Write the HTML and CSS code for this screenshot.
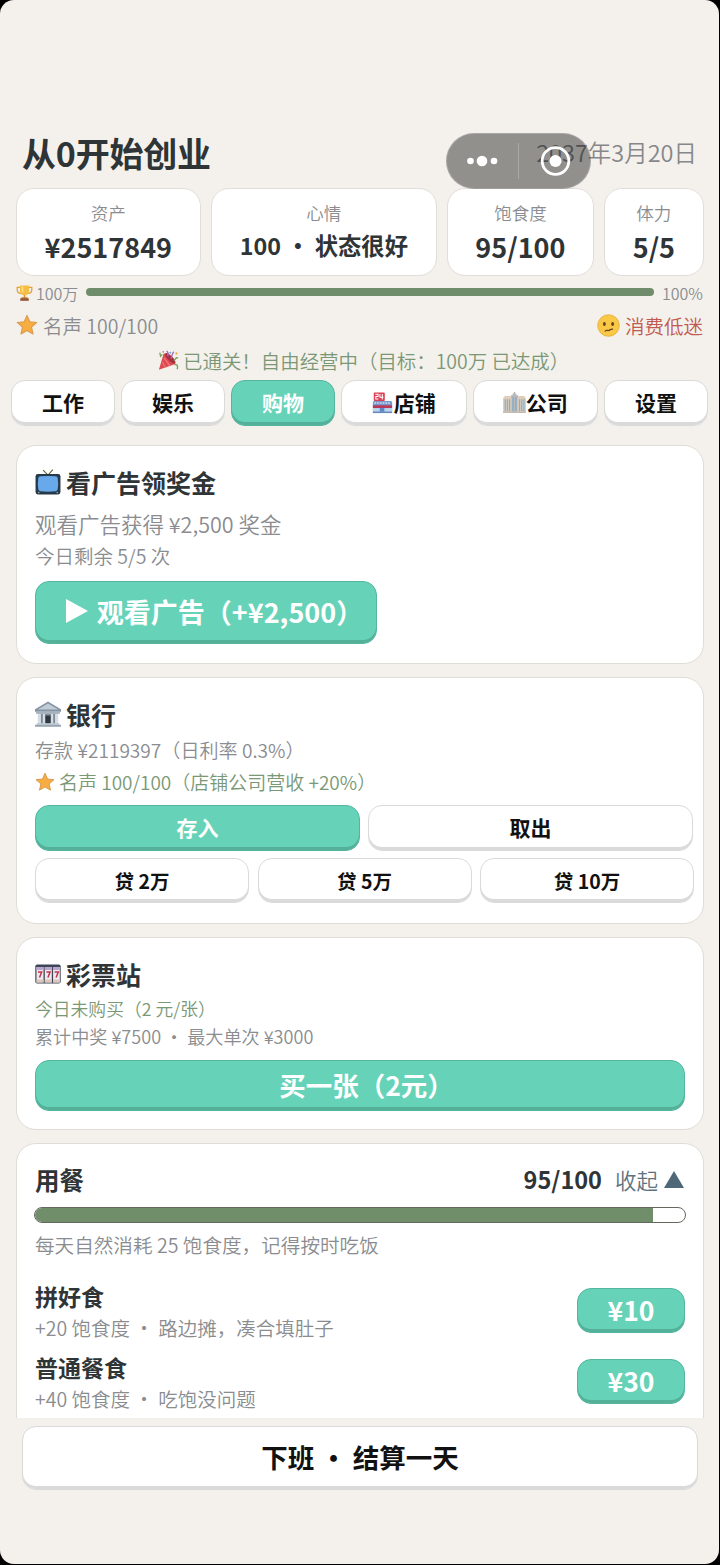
FILE: index.html
```html
<!DOCTYPE html>
<html lang="zh-CN">
<head>
<meta charset="utf-8">
<title>从0开始创业</title>
<link rel="stylesheet" href="styles.css">
</head>
<body>
<svg class="defs" width="0" height="0" aria-hidden="true">
  <symbol id="star" viewBox="0 0 24 24"><path d="M12 1.500l3 7 7.700.7-5.800 5.100 1.700 7.500L12 17.900l-6.600 3.900 1.700-7.500L1.300 9.200 9 8.500z" fill="#f8ad43" stroke="#d99a4c" stroke-width="1.200" stroke-linejoin="round"/></symbol>
  <symbol id="trophy" viewBox="0 0 24 24">
    <path d="M6 4H1.700v3.500c0 3 2 5 5.300 5M18 4h4.300v3.500c0 3-2 5-5.300 5" fill="none" stroke="#e0a23b" stroke-width="1.800"/>
    <path d="M5.500 1.500h13v7c0 4-2.500 7-6.500 7s-6.500-3-6.500-7z" fill="#f6bd45"/><path d="M7.500 2.500h3v10c-2-1-3-3-3-5z" fill="#fbd979"/>
    <path d="M11 15h2v4h-2z" fill="#d98d2f"/><path d="M8 18h8l1 2H7z" fill="#c7772d"/><path d="M6 19.500h12V23H6z" fill="#925332"/>
  </symbol>
  <symbol id="face" viewBox="0 0 24 24"><circle cx="12" cy="12" r="11.300" fill="#f9c846" stroke="#dda93b" stroke-width=".7"/><ellipse cx="7.700" cy="10.500" rx="1.500" ry="2.100" fill="#68431e"/><ellipse cx="16.300" cy="10.500" rx="1.500" ry="2.100" fill="#68431e"/><path d="M8.500 17.800c1.500-1.700 2.300-.2 3.700-.6 1.400-.4 1.800-1.600 4-1.400" fill="none" stroke="#68431e" stroke-width="1.300" stroke-linecap="round"/></symbol>
  <symbol id="party" viewBox="0 0 24 24">
    <path d="M1 22.500L6.500 4c5 0 12 6.500 13.500 12z" fill="#dc4b52"/><path d="M5 14l3.500 6M7 9l6.500 9" stroke="#f07478" stroke-width="1.500"/>
    <ellipse cx="14" cy="9.500" rx="2.800" ry="8" transform="rotate(-45 14 9.500)" fill="#a82f40"/>
    <path d="M15 10c1-4 1-6 3-8M11 7c1-2 1-4-1-6" fill="none" stroke="#9a69b6" stroke-width="1.500"/>
    <path d="M18 12c3-2 2-4 5-3M2 3l1 4 2-2M19 17c3-1 4 1 3 5" fill="none" stroke="#78a35d" stroke-width="1.600"/>
    <circle cx="21" cy="4" r="1.300" fill="#edae48"/><circle cx="6" cy="2" r="1" fill="#cc6b9e"/><circle cx="14" cy="3" r="1" fill="#6c9bd3"/>
  </symbol>
  <symbol id="tv" viewBox="0 0 24 24"><path d="M7.500 1L12 5.700 16.500.5" fill="none" stroke="#626b43" stroke-width="1.100"/><rect x=".5" y="4.700" width="23" height="18.800" rx="2.200" fill="#263a49"/><path d="M3 8.500Q3.200 7 5 6.800 12 6 19 6.800q1.800.2 2 1.700.7 5 0 10-.2 1.900-2 2.100-7 .9-14 0-1.800-.2-2-2.100-.7-5 0-10z" fill="#67a9eb"/><circle cx="3.500" cy="21.800" r=".7" fill="#a9b4bb"/><circle cx="20.500" cy="21.800" r=".7" fill="#a9b4bb"/></symbol>
  <symbol id="bank" viewBox="0 0 24 24"><path d="M0 7.500L12 .5l12 7V10H0z" fill="#8794a2"/><path d="M2.500 7.800L12 2.300l9.500 5.500z" fill="#bfcbd6"/><path d="M1 9.500h22v2.300H1z" fill="#a5b1bd"/><path d="M3 11.800h18V21H3z" fill="#7f8994"/><path d="M2.500 12h3v9h-3zm4.700 0h2v9h-2zm7.600 0h2v9h-2zm3.700 0h3v9h-3z" fill="#d5dee6"/><path d="M9.700 13.500h4.600V21H9.700z" fill="#2d3741"/><path d="M1.500 20.500h21v1.600h-21z" fill="#c0cad3"/><path d="M0 22h24v1.800H0z" fill="#98a5b1"/></symbol>
  <symbol id="slots" viewBox="0 0 26 20"><rect x=".3" y=".5" width="25.400" height="19" rx="2" fill="#3d4556"/><path d="M1.500 3h7v15.500h-7zm8.300 0h7v15.500h-7zm8.300 0h6.700v15.500h-6.700z" fill="#eee9ed"/><path d="M1.500 3h7v3h-7zm8.300 0h7v3h-7zm8.300 0h6.700v3h-6.700z" fill="#baa5ce"/><path d="M1.500 15.500h7v3h-7zm8.300 0h7v3h-7zm8.300 0h6.700v3h-6.700z" fill="#dbc6bb"/><path d="M3 8h3.700L4.500 13.500M11.400 8h3.700l-2.200 5.500M19.600 8h3.700l-2.200 5.500" fill="none" stroke="#bf354e" stroke-width="1.500"/></symbol>
  <symbol id="store" viewBox="0 0 22 24"><path d="M.5 11l1-1.300h19l1 1.300v11.500H.5z" fill="#7896c8"/><rect x="1.500" y=".5" width="12" height="9.200" rx="1" fill="#d94056"/><path d="M3.200 2.500h3v2.500H3.700v2.700h2.800M8.200 2.200v3.600H12M10.800 2.200v6" fill="none" stroke="#fff" stroke-width="1.100"/><path d="M.5 14.500h21v3H.5z" fill="#b8385c"/><path d="M2 12h18" stroke="#c8d9ee" stroke-width="1.500" stroke-dasharray="2 1"/><path d="M.5 17.500h21v4H.5z" fill="#b9d6ed"/><path d="M8 17.500h5v4H8z" fill="#5b86c8"/><path d="M.5 21.500h21V23H.5z" fill="#6886b7"/></symbol>
  <symbol id="office" viewBox="0 0 24 22"><path d="M8 3.500h2V1.500h1.200V0h1.600v1.500H14v2h2V22H8z" fill="#b8b9b8"/><path d="M0 6.500L2 4.300h5.500L9 6.500V22H0zm15 0l1.500-2.200H22l2 2.200V22h-9z" fill="#dfcdb8"/><path d="M2.300 7.500v13M4.600 7.500v13M6.900 7.500v13M17.300 7.500v13M19.600 7.500v13M21.900 7.500v13" stroke="#7eb2da" stroke-width="1.300"/><path d="M10.500 5v15M13.500 5v15" stroke="#85aecf" stroke-width="1.500"/><path d="M0 20.700h24V22H0z" fill="#c4bbb1"/></symbol>
</svg>

<main class="app">
  <header class="header">
    <h1 class="title">从0开始创业</h1>
    <span class="date">2037年3月20日</span>
    <div class="capsule">
      <svg width="145" height="56" viewBox="0 0 145 56" fill="#fff">
        <circle cx="24.500" cy="28" r="3.300"/><circle cx="36" cy="28" r="5.300"/><circle cx="48" cy="28" r="3.300"/>
        <path d="M72.500 10v36" stroke="#a9a9a5"/>
        <circle cx="109.500" cy="28" r="13.300" fill="none" stroke="#fff" stroke-width="2.800"/><circle cx="109.500" cy="28" r="6"/>
      </svg>
    </div>
  </header>

  <section class="stats">
    <div class="stat assets"><span class="stat-label">资产</span><b class="stat-value">¥2517849</b></div>
    <div class="stat mood"><span class="stat-label">心情</span><b class="stat-value small">100 ・ 状态很好</b></div>
    <div class="stat food"><span class="stat-label">饱食度</span><b class="stat-value">95/100</b></div>
    <div class="stat energy"><span class="stat-label">体力</span><b class="stat-value">5/5</b></div>
  </section>

  <div class="goal">
    <svg class="trophy"><use href="#trophy"/></svg><span class="goal-name">100万</span>
    <div class="goal-bar"></div><span>100%</span>
  </div>
  <div class="reputation">
    <span class="with-icon"><svg class="star"><use href="#star"/></svg>名声 100/100</span>
    <span class="with-icon market"><svg class="face"><use href="#face"/></svg>消费低迷</span>
  </div>
  <div class="cleared"><svg class="party"><use href="#party"/></svg>已通关！自由经营中（目标：100万 已达成）</div>

  <nav class="tabs">
    <button class="btn tab">工作</button>
    <button class="btn tab">娱乐</button>
    <button class="btn tab primary">购物</button>
    <button class="btn tab wide"><svg class="store"><use href="#store"/></svg>店铺</button>
    <button class="btn tab wide"><svg class="office"><use href="#office"/></svg>公司</button>
    <button class="btn tab">设置</button>
  </nav>

  <div class="content">
    <section class="card ad">
      <h2 class="card-title"><svg class="title-icon"><use href="#tv"/></svg>看广告领奖金</h2>
      <p class="ad-text">观看广告获得 ¥2,500 奖金</p>
      <p class="ad-left">今日剩余 5/5 次</p>
      <button class="btn primary watch"><svg class="play" viewBox="0 0 22 24"><path d="M0 0l22 12L0 24z" fill="#fff"/></svg><span class="tight-end">观看广告（+¥2,500）</span></button>
    </section>

    <section class="card bank">
      <h2 class="card-title"><svg class="title-icon"><use href="#bank"/></svg>银行</h2>
      <p class="deposit">存款 ¥2119397（日利率 0.3%）</p>
      <p class="bonus"><svg class="star-small"><use href="#star"/></svg>名声 100/100（店铺公司营收 +20%）</p>
      <div class="bank-actions"><button class="btn primary">存入</button><button class="btn">取出</button></div>
      <div class="loans"><button class="btn">贷 2万</button><button class="btn">贷 5万</button><button class="btn">贷 10万</button></div>
    </section>

    <section class="card lottery">
      <h2 class="card-title"><svg class="slots"><use href="#slots"/></svg>彩票站</h2>
      <p class="ticket green">今日未购买（2 元/张）</p>
      <p class="ticket">累计中奖 ¥7500 ・ 最大单次 ¥3000</p>
      <button class="btn primary buy"><span class="tight-end">买一张（2元）</span></button>
    </section>

    <section class="card meals">
      <div class="meal-head"><h2 class="meal-title">用餐</h2><b class="meal-count">95/100</b><span class="fold">收起</span><svg class="triangle" viewBox="0 0 20 17"><path d="M10 0l10 17H0z" fill="#4f6878"/></svg></div>
      <div class="meter"><div class="meter-fill" style="width:95%"></div></div>
      <p class="meal-note">每天自然消耗 25 饱食度，记得按时吃饭</p>
      <div class="meal">
        <div><h3 class="meal-name">拼好食</h3><p class="meal-desc">+20 饱食度 ・ 路边摊，凑合填肚子</p></div>
        <button class="btn primary price">¥10</button>
      </div>
      <div class="meal">
        <div><h3 class="meal-name">普通餐食</h3><p class="meal-desc">+40 饱食度 ・ 吃饱没问题</p></div>
        <button class="btn primary price">¥30</button>
      </div>
    </section>
  </div>

  <footer class="footer"><button class="btn finish">下班 ・ 结算一天</button></footer>
</main>
</body>
</html>
```
FILE: styles.css
```css
* { box-sizing: border-box; margin: 0; padding: 0; }
body { background: #000; font-family: "Noto Sans CJK SC", sans-serif; color: #2f3437; }
.defs { display: block; position: absolute; }
svg { flex: none; }
.app { width: 719px; height: 1564px; background: #f4f1ec; border-radius: 14px; overflow: hidden; display: flex; flex-direction: column; white-space: nowrap; font-weight: 350; }

.header { position: relative; display: flex; justify-content: space-between; align-items: center; height: 188px; padding: 118px 22px 0 22px; }
.title { font-size: 34px; line-height: 42px; letter-spacing: -.2px; }
.date { font-size: 23.500px; line-height: 34px; padding-bottom: 2px; color: #85878a; }
.capsule { position: absolute; left: 446px; top: 133px; width: 145px; height: 56px; border-radius: 28px; background: rgba(0,0,0,.4); box-shadow: inset 0 0 0 1px rgba(255,255,255,.22); }
.capsule svg { display: block; }

.stats { display: flex; gap: 10px; padding: 0 15.500px; height: 88px; }
.stat { background: #fff; border: 1px solid #e2ddd8; border-radius: 18px; display: flex; flex-direction: column; align-items: center; padding-top: 11px; }
.assets { width: 186px; } .mood { width: 226px; } .food { width: 148px; } .energy { width: 99.500px; }
.stat-label { font-size: 17.500px; line-height: 26px; color: #8a8c90; }
.stat-value { font-size: 27px; line-height: 42px; }
.small { font-size: 23.300px; line-height: 39px; }

.goal { display: flex; align-items: center; height: 32px; padding: 2px 16px 0; font-size: 16px; color: #8a8c90; }
.trophy { width: 17px; height: 18px; margin-right: 3px; }
.goal-bar { width: 568px; height: 8px; margin: 0 8px; border-radius: 4px; background: #6f8d6b; position: relative; top: -1px; }
.goal-name { width: 42px; }
.reputation { display: flex; justify-content: space-between; align-items: center; height: 34px; padding: 0 16px 0 16px; font-size: 19.500px; color: #8a8c90; }
.with-icon { display: flex; align-items: center; }
.star { width: 22px; height: 22px; margin-right: 5px; }
.face { width: 23px; height: 23px; margin-right: 5px; }
.market { color: #c0594e; }
.cleared { display: flex; align-items: center; height: 37px; padding: 0 0 1px 158px; color: #7a9875; font-size: 19.450px; }
.party { width: 21px; height: 21px; margin-right: 4px; }

.btn { font: 700 21px/1 "Noto Sans CJK SC", sans-serif; color: #111; background: #fff; border: 1px solid #dadad9; border-radius: 14px; box-shadow: inset 0 -3px #dadada; display: flex; align-items: center; justify-content: center; white-space: nowrap; }
.primary { color: #fff; background: #66d3b8; border-color: #55b6a0; box-shadow: inset 0 -3px #55b09a; }
.tight-end { margin-right: -13px; }
.tabs { display: flex; gap: 6px; height: 46px; margin-top: 1px; padding: 0 10px 0 11px; }
.tab { width: 104px; height: 46px; padding-bottom: 1px; border-radius: 14px; }
.tab.wide { width: 125.500px; }
.store { width: 21px; height: 22px; margin-right: 1px; }
.office { width: 23px; height: 21px; }

.content { height: 992px; padding-top: 19px; display: flex; flex-direction: column; gap: 13px; overflow: hidden; flex: none; }
.card { width: 688px; margin-left: 16px; background: #fff; border: 1px solid #e0ddd9; border-radius: 20px; padding: 17px 18px; flex: none; }
.card-title { font-size: 25px; line-height: 38px; display: flex; align-items: center; }
.title-icon { width: 26px; height: 26px; margin-right: 5px; }
.card p { font-size: 19.500px; color: #8a8c90; }
.card .green { color: #7a9875; }

.ad { height: 219px; }
.card .ad-text { font-size: 21.500px; line-height: 43px; margin-top: 1px; }
.ad-left { line-height: 22px; }
.watch { width: 342px; height: 63px; margin-top: 14px; padding: 0 0 3px 4px; font-size: 27px; border-radius: 14px; }
.play { width: 22px; height: 24px; margin-right: 9px; }

.bank { height: 247px; }
.card .deposit { font-size: 19.100px; line-height: 32px; margin-top: 1px; }
.card .bonus { font-size: 19px; line-height: 31px; color: #7a9875; display: flex; align-items: center; }
.star-small { width: 20px; height: 20px; margin-right: 4px; }
.bank-actions { display: grid; grid-template-columns: 325px 325px; gap: 8px; height: 46px; margin-top: 8px; }
.bank-actions .btn { padding-bottom: 1px; }
.loans { display: grid; grid-template-columns: repeat(3, 214px); gap: 8.500px; height: 45px; margin-top: 7px; }
.loans .btn { font-size: 19.500px; }

.lottery { height: 193px; }
.slots { width: 26px; height: 20px; margin-right: 5px; }
.card .ticket { font-size: 18.100px; line-height: 28px; }
.card .ticket.green { font-size: 17.800px; margin-top: 1px; }
.buy { width: 650px; height: 51px; margin-top: 10px; padding-bottom: 1px; font-size: 26.500px; }

.meals { height: 340px; }
.meal-head { display: flex; align-items: center; height: 38px; padding-bottom: 2px; }
.meal-title { font-size: 24.500px; margin-right: auto; }
.meal-count { font-size: 23.500px; margin-right: 13px; }
.fold { font-size: 21.500px; color: #5d7380; margin-right: 6px; }
.triangle { width: 20px; height: 17px; margin-right: 1px; }
.meter { width: 652px; height: 16px; margin: 8px 0 0 -1px; border: 1px solid #65685f; border-radius: 8px; background: #fff; overflow: hidden; }
.meter-fill { height: 100%; background: #718e6b; }
.card .meal-note { font-size: 19.600px; line-height: 44px; margin-bottom: 12px; }
.meal { display: flex; justify-content: space-between; align-items: flex-start; height: 71px; }
.meal-name { font-size: 23px; line-height: 34px; }
.meal-desc { line-height: 29px; }
.price { width: 108px; height: 45px; margin-top: 9px; font-size: 26.500px; border-radius: 14px; }

.footer { padding: 8px 22px; }
.finish { width: 676px; height: 64px; padding-bottom: 1px; font-size: 26.500px; border-radius: 14px; }
```
